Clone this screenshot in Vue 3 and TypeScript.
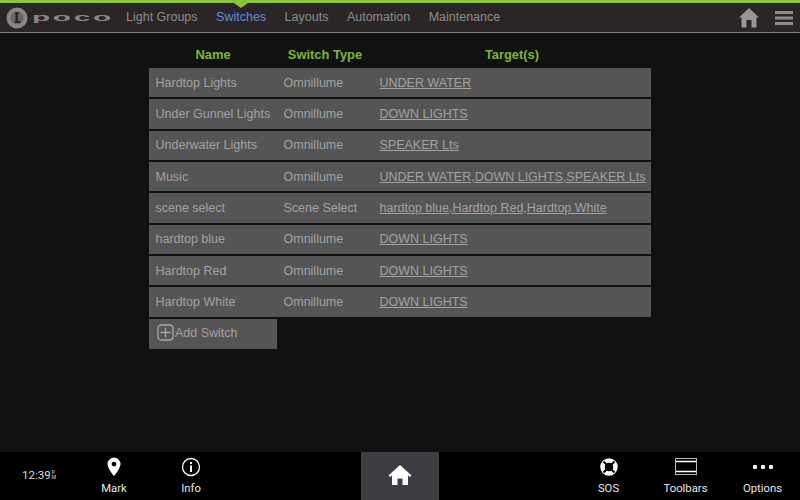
<script setup lang="ts">
interface SwitchRow {
  name: string;
  type: string;
  targets: string;
}

const tabs: string[] = ['Light Groups', 'Switches', 'Layouts', 'Automation', 'Maintenance'];

const rows: SwitchRow[] = [
  { name: 'Hardtop Lights', type: 'Omnillume', targets: 'UNDER WATER' },
  { name: 'Under Gunnel Lights', type: 'Omnillume', targets: 'DOWN LIGHTS' },
  { name: 'Underwater Lights', type: 'Omnillume', targets: 'SPEAKER Lts' },
  { name: 'Music', type: 'Omnillume', targets: 'UNDER WATER,DOWN LIGHTS,SPEAKER Lts' },
  { name: 'scene select', type: 'Scene Select', targets: 'hardtop blue,Hardtop Red,Hardtop White' },
  { name: 'hardtop blue', type: 'Omnillume', targets: 'DOWN LIGHTS' },
  { name: 'Hardtop Red', type: 'Omnillume', targets: 'DOWN LIGHTS' },
  { name: 'Hardtop White', type: 'Omnillume', targets: 'DOWN LIGHTS' },
];
</script>

<template>
  <div class="screen">
    <header class="topbar">
      <div class="logo">
        <svg width="22" height="24" viewBox="0 0 22 24">
          <circle cx="11" cy="12" r="10.5" fill="#8a8686" />
          <circle cx="11" cy="12" r="6.5" fill="#6a6666" />
          <path d="M9 6h4v1.500h-1V15h2.500v2H8.500v-1.500H9.500V7.500H9z" fill="#2a2628" />
        </svg>
        <span class="wordmark">poco</span>
      </div>
      <nav class="tabs">
        <span v-for="t in tabs" :key="t" class="tab" :class="{ active: t === 'Switches' }">{{ t }}</span>
      </nav>
      <div class="top-icons">
        <svg width="20" height="20" viewBox="0 0 20 20">
          <path d="M10 0 L20 9.500 H17.500 V19.500 H12.500 V12 H7.500 V19.500 H2.500 V9.500 H0 Z" fill="#9a9696" />
        </svg>
        <svg width="18" height="16" viewBox="0 0 18 16">
          <path d="M0 1h18v3H0zM0 6.500h18v3H0zM0 12h18v3H0z" fill="#8e8a8a" />
        </svg>
      </div>
    </header>

    <main class="content">
      <div class="table">
        <div class="grid head">
          <span>Name</span>
          <span>Switch Type</span>
          <span>Target(s)</span>
        </div>
        <div v-for="r in rows" :key="r.name" class="grid row">
          <span class="pad">{{ r.name }}</span>
          <span class="pad">{{ r.type }}</span>
          <span class="pad link">{{ r.targets }}</span>
        </div>
        <div class="add">
          <svg width="17" height="17" viewBox="0 0 17 17">
            <rect x="1" y="1" width="15" height="15" rx="3" fill="none" stroke="#aaa6a6" stroke-width="1.300" />
            <path d="M8.500 3.500v10M3.500 8.500h10" stroke="#aaa6a6" stroke-width="1.300" />
          </svg>
          <span>Add Switch</span>
        </div>
      </div>
    </main>

    <footer class="bottombar">
      <div class="side left">
        <div class="clock">12:39<span class="ampm">P<br />M</span></div>
        <div class="tool">
          <svg width="16" height="20" viewBox="0 0 16 20">
            <path fill-rule="evenodd" d="M8 .500A6.500 6.500 0 0 0 1.500 7c0 4.500 6.500 12 6.500 12s6.500-7.500 6.500-12A6.500 6.500 0 0 0 8 .500zM8 4.700a2.400 2.400 0 1 1 0 4.800 2.400 2.400 0 0 1 0-4.800z" fill="#fff" />
          </svg>
          <span>Mark</span>
        </div>
        <div class="tool">
          <svg width="20" height="20" viewBox="0 0 20 20">
            <circle cx="10" cy="10" r="8.500" fill="none" stroke="#fff" stroke-width="1.300" />
            <rect x="9" y="8.500" width="2" height="6.500" fill="#fff" />
            <rect x="9" y="5" width="2" height="2" fill="#fff" />
          </svg>
          <span>Info</span>
        </div>
      </div>
      <div class="home">
        <svg width="24" height="22" viewBox="0 0 24 22">
          <path d="M12 1 L23.500 11.500 L21.800 13 L20 11.400 V21 H14.500 V14.500 H9.500 V21 H4 V11.400 L2.200 13 L.500 11.500 Z" fill="#fff" />
        </svg>
      </div>
      <div class="side right">
        <div class="tool">
          <svg width="18" height="18" viewBox="0 0 18 18">
            <circle cx="9" cy="9" r="6.500" fill="none" stroke="#fff" stroke-width="4.500" />
            <path d="M3.500 3.500l3 3M14.500 3.500l-3 3M3.500 14.500l3-3M14.500 14.500l-3-3" stroke="#000" stroke-width="2" />
          </svg>
          <span>SOS</span>
        </div>
        <div class="tool">
          <svg width="22" height="18" viewBox="0 0 22 18">
            <rect x=".500" y=".500" width="21" height="16" fill="none" stroke="#bbb" />
            <path d="M1 3.500h20M1 13.500h20" stroke="#fff" stroke-width="1.500" />
          </svg>
          <span>Toolbars</span>
        </div>
        <div class="tool">
          <svg width="22" height="18" viewBox="0 0 22 18">
            <circle cx="3" cy="9" r="2.200" fill="#fff" />
            <circle cx="11" cy="9" r="2.200" fill="#fff" />
            <circle cx="19" cy="9" r="2.200" fill="#fff" />
          </svg>
          <span>Options</span>
        </div>
      </div>
    </footer>
  </div>
</template>

<style>
html, body { margin: 0; background: #111; }
</style>

<style scoped>
.screen {
  width: 800px;
  height: 500px;
  display: flex;
  flex-direction: column;
  background: #111111;
  font-family: "Liberation Sans", Arial, sans-serif;
  overflow: hidden;
}
.topbar {
  height: 29px;
  flex: none;
  display: flex;
  align-items: center;
  position: relative;
  background: #2a2628;
  border-top: 3px solid #8bc43c;
  border-bottom: 1px solid #7f7f7f;
}
.logo {
  width: 126px;
  padding-left: 6px;
  box-sizing: border-box;
  display: flex;
  align-items: center;
  gap: 4px;
  flex: none;
}
.wordmark {
  font-size: 11px;
  font-weight: 700;
  line-height: 11px;
  color: #8a8686;
  letter-spacing: 1px;
  transform: scaleX(2.700);
  transform-origin: left center;
}
.tabs {
  display: flex;
  gap: 18.500px;
  font-size: 12.500px;
}
.tab { color: #8e8b8b; position: relative; line-height: 29px; }
.tab.active { color: #5f8fd0; }
.tab.active::before {
  content: "";
  position: absolute;
  left: 50%;
  top: 0;
  margin-left: -7px;
  border: 7px solid transparent;
  border-top: 5px solid #8bc43c;
  border-bottom: 0;
}
.top-icons {
  margin-left: auto;
  display: flex;
  align-items: center;
  gap: 16px;
  padding-right: 7px;
}
.content {
  flex: 1;
  min-height: 0;
  padding-left: 149px;
}
.table { width: 502px; }
.grid {
  display: grid;
  grid-template-columns: 128px 96px 1fr;
}
.head {
  height: 35.200px;
  padding-top: 7px;
  box-sizing: border-box;
  align-items: center;
  font-size: 12.900px;
  font-weight: 700;
  color: #7cb53a;
  text-align: center;
}
.row {
  height: 29.300px;
  margin-bottom: 2px;
  align-items: center;
  background: #555555;
  font-size: 12.500px;
  color: #a3a0a0;
}
.pad { padding-left: 6.500px; white-space: nowrap; }
.link { text-decoration: underline; }
.add {
  width: 128px;
  height: 30.600px;
  box-sizing: border-box;
  padding-left: 8px;
  padding-bottom: 2px;
  display: flex;
  align-items: center;
  gap: 1px;
  background: #555555;
  font-size: 12.500px;
  color: #a3a0a0;
}
.bottombar {
  height: 48px;
  flex: none;
  display: flex;
  background: #000;
  color: #e8e8e8;
  font-family: Roboto, sans-serif;
  font-size: 11.300px;
}
.side {
  display: flex;
  align-items: stretch;
}
.left { width: 361px; flex: none; }
.right { flex: 1; justify-content: flex-end; margin-right: -1px; }
.clock {
  width: 53.500px;
  margin-left: 22px;
  flex: none;
  display: flex;
  align-items: center;
  font-size: 11.500px;
  color: #ddd;
  padding-bottom: 2px;
}
.ampm { font-size: 5px; line-height: 5px; margin-left: 1px; }
.tool {
  width: 77px;
  flex: none;
  display: flex;
  flex-direction: column;
  align-items: center;
  padding-top: 5px;
  gap: 5px;
  box-sizing: border-box;
}
.tool svg { height: 20px; }
.home {
  width: 78px;
  flex: none;
  display: flex;
  justify-content: center;
  padding-top: 12px;
  box-sizing: border-box;
  background: #3d3e42;
}
</style>
